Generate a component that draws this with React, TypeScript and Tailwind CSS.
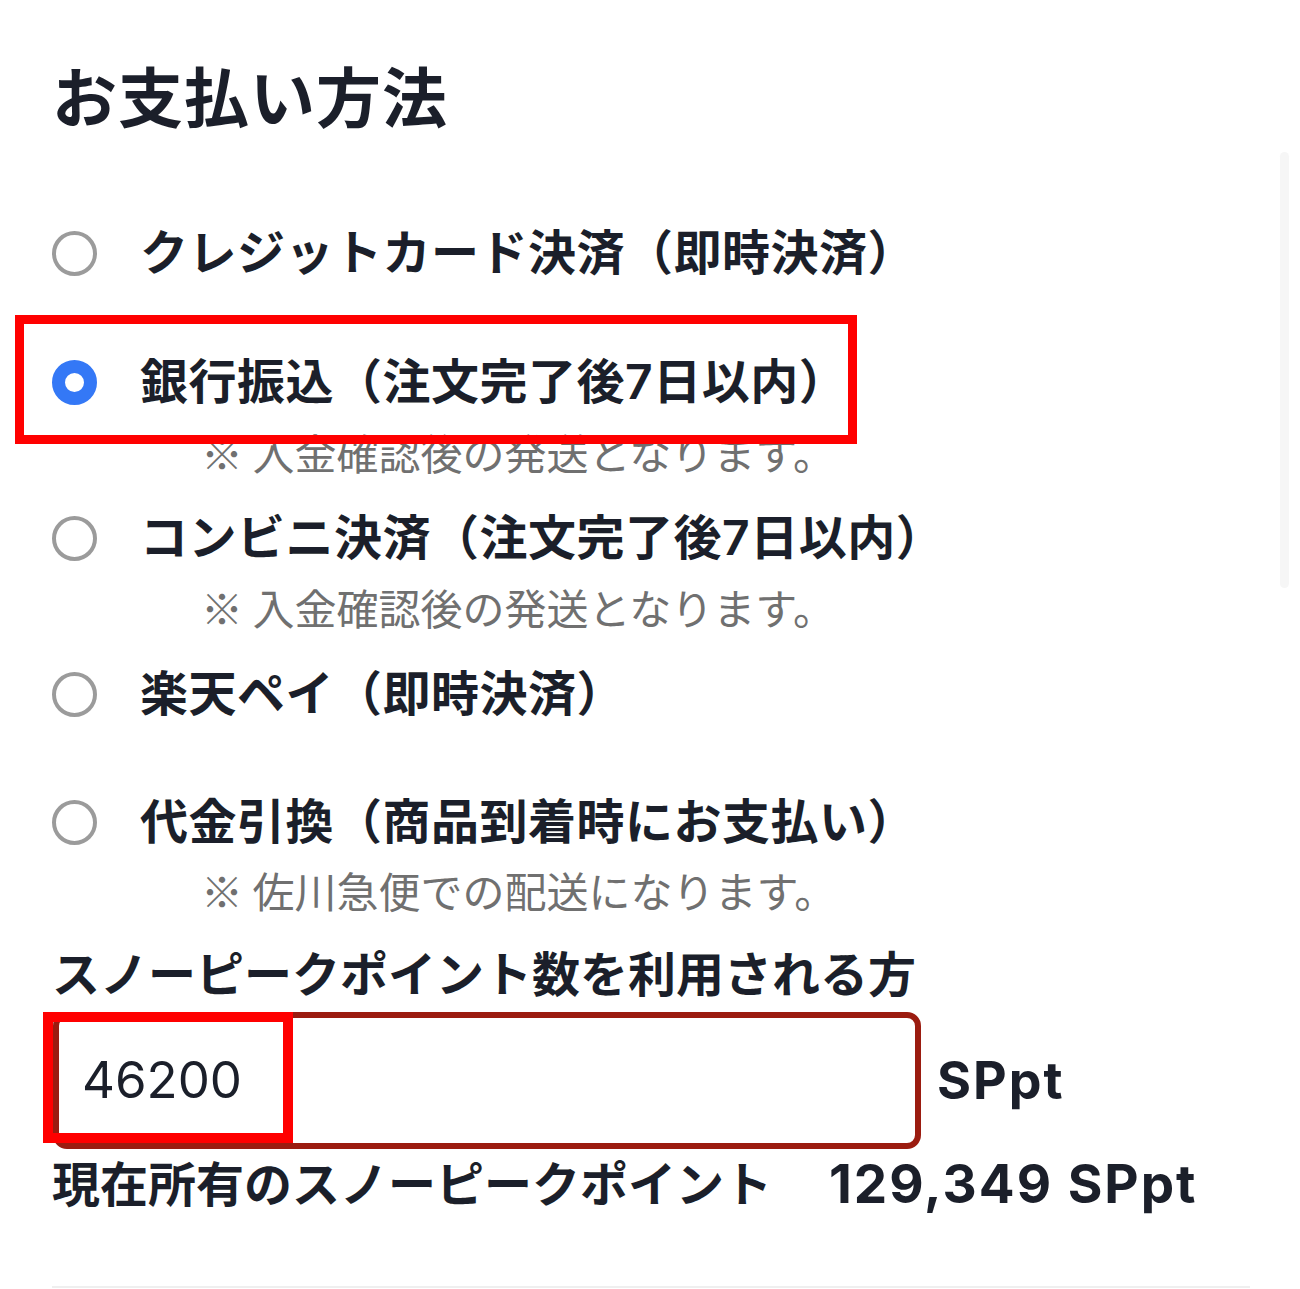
import React from "react";

type OptionProps = {
  label: string;
  note?: string;
  checked?: boolean;
  rowClass: string;
  noteClass?: string;
  annotated?: boolean;
};

function Radio({ checked }: { checked?: boolean }) {
  return checked ? (
    <span className="block h-[45px] w-[45px] shrink-0 rounded-full border-[13px] border-[#3478f6] bg-white" />
  ) : (
    <span className="block h-[45px] w-[45px] shrink-0 rounded-full border-[4px] border-[#9b9b9b] bg-white" />
  );
}

function Option({ label, note, checked, rowClass, noteClass, annotated }: OptionProps) {
  return (
    <>
      <div className={rowClass}>
        <Radio checked={checked} />
        <span className="ml-[43px] whitespace-nowrap text-[48px] font-semibold leading-[64px] tracking-[0.5px]">{label}</span>
        {annotated && (
          <div className="pointer-events-none absolute left-[-37px] top-[-35px] h-[129px] w-[842px] border-[9px] border-[#ff0000]" />
        )}
      </div>
      {note && <div className={noteClass}>{note}</div>}
    </>
  );
}

export default function App() {
  return (
    <div className="relative min-h-[1289px] w-[1300px] overflow-hidden bg-white font-['Inter','Noto_Sans_CJK_JP',sans-serif] text-[#1b1f2a]">
      <div className="absolute left-[1280px] top-[152px] h-[436px] w-[9px] rounded-full bg-[#f6f6f6]" />
      <div className="flex flex-col pl-[52px] pr-[50px]">
        <h1 className="mt-[67px] whitespace-nowrap text-[65px] font-bold leading-[64px] tracking-[1px]">お支払い方法</h1>

        <Option
          label="クレジットカード決済（即時決済）"
          rowClass="relative mt-[90px] flex h-[64px] items-center"
        />
        <Option
          label="銀行振込（注文完了後7日以内）"
          checked
          annotated
          rowClass="relative mt-[65px] flex h-[64px] items-center"
          note="※ 入金確認後の発送となります。"
          noteClass="mt-[14px] h-[48px] whitespace-nowrap pl-[149px] font-['Noto_Sans_CJK_JP',sans-serif] text-[42px] font-normal leading-[48px] text-[#707070]"
        />
        <Option
          label="コンビニ決済（注文完了後7日以内）"
          rowClass="relative mt-[30px] flex h-[64px] items-center"
          note="※ 入金確認後の発送となります。"
          noteClass="mt-[13px] h-[48px] whitespace-nowrap pl-[149px] font-['Noto_Sans_CJK_JP',sans-serif] text-[42px] font-normal leading-[48px] text-[#707070]"
        />
        <Option
          label="楽天ペイ（即時決済）"
          rowClass="relative mt-[31px] flex h-[64px] items-center"
        />
        <Option
          label="代金引換（商品到着時にお支払い）"
          rowClass="relative mt-[64px] flex h-[64px] items-center"
          note="※ 佐川急便での配送になります。"
          noteClass="mt-[12px] h-[48px] whitespace-nowrap pl-[149px] font-['Noto_Sans_CJK_JP',sans-serif] text-[42px] font-normal leading-[48px] text-[#707070]"
        />

        <div className="mt-[29px] flex h-[64px] items-center whitespace-nowrap text-[48px] font-bold">
          スノーピークポイント数を利用される方
        </div>

        <div className="mt-[5px] flex items-center gap-[16px]">
          <div className="relative ml-[1px] flex h-[137px] w-[868px] items-center rounded-[14px] border-[6px] border-[#9b1c10] bg-white pl-[23px] text-[51px] font-normal text-[#1b1f2a]">
            46200
            <div className="pointer-events-none absolute left-[-16px] top-[-6px] h-[131px] w-[250px] border-[10px] border-[#ff0000]" />
          </div>
          <span className="whitespace-nowrap text-[52px] font-bold tracking-[2px]">SPpt</span>
        </div>

        <div className="mt-[4px] flex h-[64px] items-center whitespace-nowrap font-bold">
          <span className="text-[48px]">現在所有のスノーピークポイント</span>
          <span className="ml-[57px] text-[53px] tracking-[2px]">129,349 SPpt</span>
        </div>

        <div className="mt-[69px] h-[2px] bg-[#efefef]" />
      </div>
    </div>
  );
}
